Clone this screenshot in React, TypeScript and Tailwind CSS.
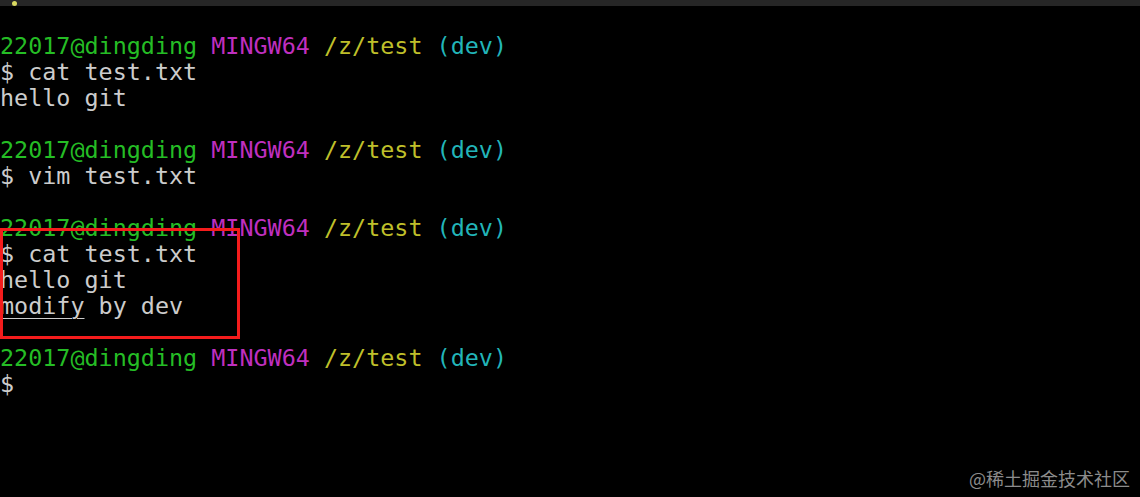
export default function App() {
    const prompt = (
        <div>
            <span className="text-[#25bd25]">22017@dingding</span>{' '}
            <span className="text-[#bf2fbf]">MINGW64</span>{' '}
            <span className="text-[#bfbf2a]">/z/test</span>{' '}
            <span className="text-[#22b5b9]">(dev)</span>
        </div>
    )

    return (
        <div className="relative h-[497px] w-[1140px] overflow-hidden bg-black">
            {/* title bar strip */}
            <div className="flex h-[6px] items-center bg-[#262626] pl-[12px]">
                <div className="h-[5px] w-[5px] rounded-full bg-[#d8d860]" />
            </div>

            <div className="whitespace-pre pt-[27px] font-['DejaVu_Sans_Mono',monospace] text-[23.4px] leading-[26px] text-[#cccccc]">
                {prompt}
                <div>$ cat test.txt</div>
                <div>hello git</div>
                <div>&nbsp;</div>
                {prompt}
                <div>$ vim test.txt</div>
                <div>&nbsp;</div>
                {prompt}
                <div className="relative">
                    <div className="pointer-events-none absolute left-0 top-[-13px] h-[111px] w-[240px] border-[3px] border-[#f51c1c]" />
                    <div>$ cat test.txt</div>
                    <div>hello git</div>
                    <div>
                        <span className="underline decoration-1 underline-offset-[4px]">modify</span> by dev
                    </div>
                </div>
                <div>&nbsp;</div>
                {prompt}
                <div>$</div>
            </div>

            <div className="absolute bottom-[10px] right-[10px] font-['Noto_Sans_CJK_SC',sans-serif] text-[18px] leading-none text-[#8c8c8c]">
                @稀土掘金技术社区
            </div>
        </div>
    )
}
